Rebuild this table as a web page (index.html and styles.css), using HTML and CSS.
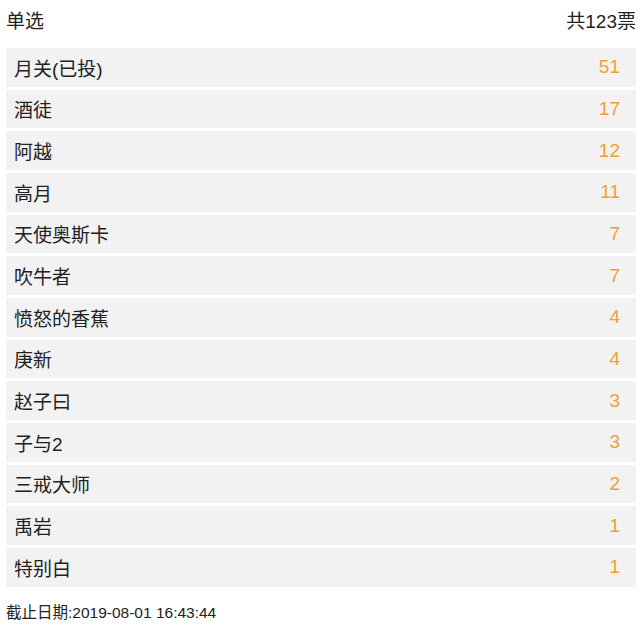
FILE: index.html
```
<!DOCTYPE html>
<html lang="zh">
<head>
<meta charset="utf-8">
<link rel="stylesheet" href="styles.css">
</head>
<body>
<div class="poll">
  <div class="head"><span>单选</span><span>共123票</span></div>
  <ul class="list">
    <li class="row"><span>月关(已投)</span><span class="num">51</span></li>
    <li class="row"><span>酒徒</span><span class="num">17</span></li>
    <li class="row"><span>阿越</span><span class="num">12</span></li>
    <li class="row"><span>高月</span><span class="num">11</span></li>
    <li class="row"><span>天使奥斯卡</span><span class="num">7</span></li>
    <li class="row"><span>吹牛者</span><span class="num">7</span></li>
    <li class="row"><span>愤怒的香蕉</span><span class="num">4</span></li>
    <li class="row"><span>庚新</span><span class="num">4</span></li>
    <li class="row"><span>赵子曰</span><span class="num">3</span></li>
    <li class="row"><span>子与2</span><span class="num">3</span></li>
    <li class="row"><span>三戒大师</span><span class="num">2</span></li>
    <li class="row"><span>禹岩</span><span class="num">1</span></li>
    <li class="row"><span>特别白</span><span class="num">1</span></li>
  </ul>
  <div class="foot">截止日期:2019-08-01 16:43:44</div>
</div>
</body>
</html>
```
FILE: styles.css
```
html, body { margin: 0; padding: 0; background: #fff; }
body {
  font-family: "Liberation Sans", "Noto Sans CJK SC", sans-serif;
  color: #222;
}
.poll { padding: 0 4px 0 6px; }
.head {
  display: flex;
  justify-content: space-between;
  height: 48px;
  line-height: 44px;
  font-size: 19px;
}
.list { list-style: none; margin: 0; padding: 0; }
.row {
  display: flex;
  justify-content: space-between;
  align-items: center;
  height: 38.67px;
  margin-bottom: 3px;
  padding: 0 16px 0 8px;
  background: #f2f2f2;
  font-size: 19px;
}
.num { color: #f0a030; }
.foot {
  margin-top: 13px;
  font-size: 15.5px;
  color: #222;
}
```
